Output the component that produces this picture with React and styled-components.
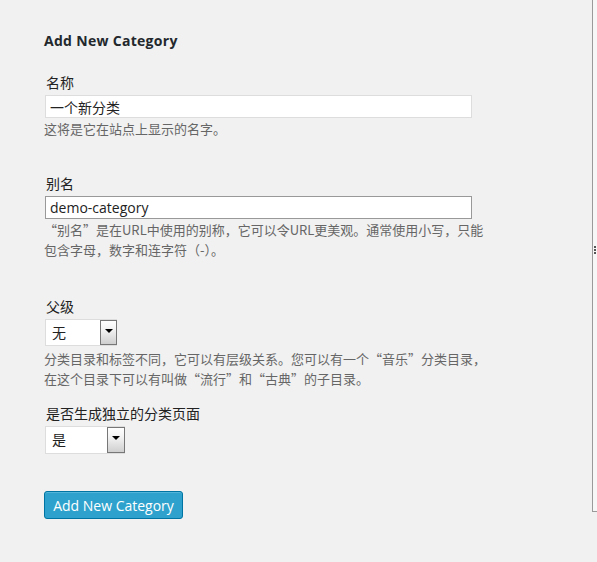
import styled, { createGlobalStyle } from 'styled-components';

const GlobalStyle = createGlobalStyle`
  html, body {
    margin: 0;
    padding: 0;
    background: #f1f1f1;
  }
  body {
    font-family: "Open Sans", "Noto Sans CJK SC", sans-serif;
    color: #222;
  }
`;

const App = () => {
  return <Page>
    <GlobalStyle />
    <Main>
      <Heading>Add New Category</Heading>

      <Field $gap="22px">
        <Label>名称</Label>
        <TextInput defaultValue="一个新分类" />
        <Help>这将是它在站点上显示的名字。</Help>
      </Field>

      <Field $gap="35px">
        <Label>别名</Label>
        <TextInput $focused defaultValue="demo-category" />
        <Help>“别名”是在URL中使用的别称，它可以令URL更美观。通常使用小写，只能包含字母，数字和连字符（-）。</Help>
      </Field>

      <Field $gap="37px">
        <Label>父级</Label>
        <FakeSelect width={72} arrow={17} value="无" />
        <Help $top="3px">分类目录和标签不同，它可以有层级关系。您可以有一个“音乐”分类目录，在这个目录下可以有叫做“流行”和“古典”的子目录。</Help>
      </Field>

      <Field $gap="15px">
        <Label>是否生成独立的分类页面</Label>
        <FakeSelect width={80} arrow={18} value="是" />
      </Field>

      <Submit>Add New Category</Submit>
    </Main>
    <SideStrip>
      <Grip><i /><i /><i /></Grip>
    </SideStrip>
  </Page>;
};

const FakeSelect = ({ width, arrow, value }) => (
  <SelectBox $w={width}>
    <SelectValue>{value}</SelectValue>
    <ArrowBox $w={arrow}>
      <Caret />
    </ArrowBox>
  </SelectBox>
);

export default App;

const Page = styled.div`
  display: flex;
  min-height: 562px;
`;

const Main = styled.div`
  flex: 1;
  padding: 31px 0 0 44px;
`;

const Heading = styled.h3`
  margin: 0;
  font-size: 14px;
  line-height: 20px;
  font-weight: 700;
  letter-spacing: 0.3px;
  color: #23282d;
`;

const Field = styled.div`
  margin-top: ${p => p.$gap};
  width: 446px;
`;

const Label = styled.div`
  font-size: 14px;
  line-height: 20px;
  color: #222;
  padding-left: 2px;
`;

const TextInput = styled.input`
  display: block;
  box-sizing: border-box;
  margin: 2px 0 0 1px;
  width: 427px;
  height: 23px;
  padding: 0 4px;
  border: 1px solid ${p => p.$focused ? '#999' : '#ddd'};
  background: #fff;
  font-family: "Open Sans", "Noto Sans CJK SC", sans-serif;
  font-size: 14px;
  color: #222;
  outline: none;
`;

const Help = styled.p`
  margin: ${p => p.$top || '1px'} 0 0;
  font-family: "Noto Sans CJK SC", sans-serif;
  font-size: 13px;
  line-height: 20px;
  color: #666;
`;

const SelectBox = styled.div`
  display: flex;
  box-sizing: border-box;
  margin: 2px 0 0 1px;
  width: ${p => p.$w}px;
  height: ${p => p.$w > 75 ? 28 : 27}px;
  border: 1px solid #ddd;
  border-right: none;
  background: #fff;
`;

const SelectValue = styled.div`
  flex: 1;
  padding-left: 6px;
  font-size: 14px;
  line-height: 25px;
  color: #222;
`;

const ArrowBox = styled.div`
  box-sizing: border-box;
  width: ${p => p.$w}px;
  border: 1px solid #777;
  background: linear-gradient(#fff 0%, #f4f4f4 35%, #cfcfcf 100%);
  display: flex;
  justify-content: center;
  padding-top: 8px;
`;

const Caret = styled.div`
  width: 0;
  height: 0;
  border-left: 4px solid transparent;
  border-right: 4px solid transparent;
  border-top: 4px solid #000;
`;

const Submit = styled.button`
  display: block;
  margin-top: 37px;
  box-sizing: border-box;
  width: 139px;
  height: 28px;
  padding: 0;
  border: 1px solid #0074a2;
  border-radius: 3px;
  background: #2ea2cc;
  box-shadow: inset 0 1px 0 rgba(120, 200, 230, 0.5);
  color: #fff;
  font-family: "Open Sans", "Noto Sans CJK SC", sans-serif;
  font-size: 14px;
  cursor: pointer;
`;

const SideStrip = styled.div`
  box-sizing: border-box;
  width: 5px;
  height: 512px;
  border-left: 1px solid #9a9a9a;
  border-bottom: 1px solid #9a9a9a;
  background: #f7f7f7;
  display: flex;
  flex-direction: column;
  align-items: flex-end;
  padding-top: 246px;
`;

const Grip = styled.div`
  display: flex;
  flex-direction: column;
  gap: 1px;
  padding-right: 1px;

  i {
    display: block;
    width: 2px;
    height: 2px;
    background: #555;
  }
`;
